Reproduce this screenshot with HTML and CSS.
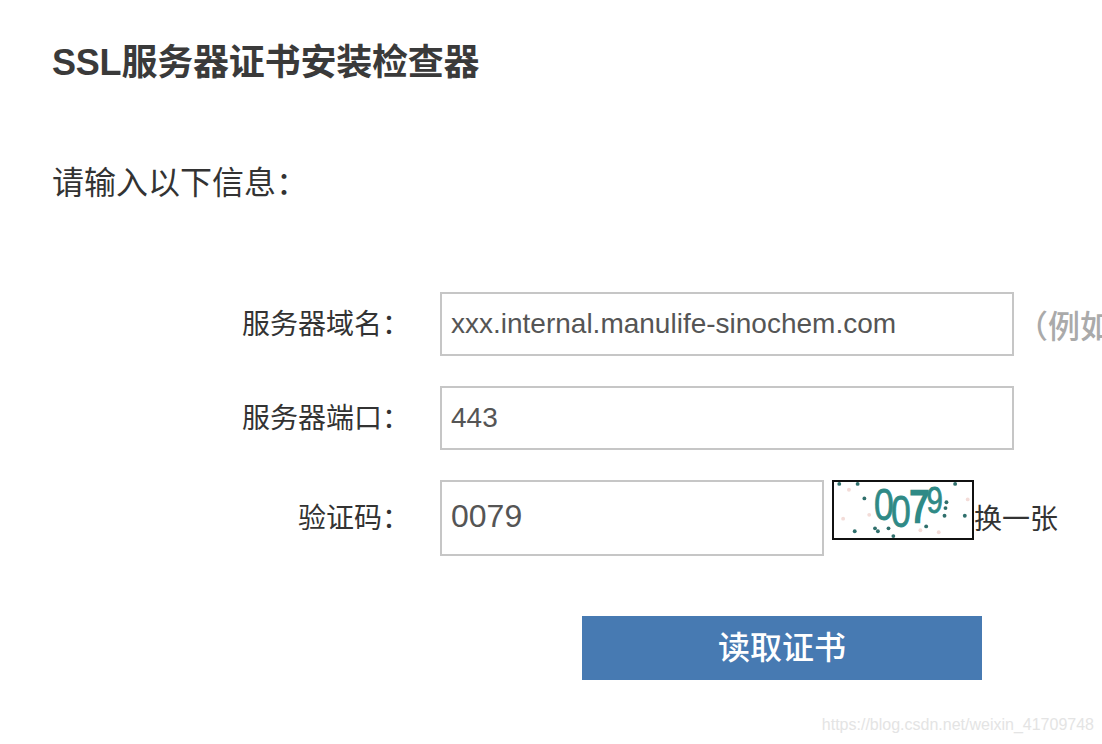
FILE: index.html
```html
<!DOCTYPE html>
<html lang="zh-CN">
<head>
    <meta charset="UTF-8">
    <meta name="viewport" content="width=device-width, initial-scale=1.0">
    <title>SSL服务器证书安装检查器</title>
    <link rel="stylesheet" href="styles.css">
</head>

<body>
    <div class="page">
        <h1 class="title">SSL服务器证书安装检查器</h1>
        <p class="intro">请输入以下信息：</p>

        <form class="check_form">
            <div class="row">
                <label class="row_label">服务器域名：</label>
                <input class="field" type="text" value="xxx.internal.manulife-sinochem.com">
                <span class="hint">（例如</span>
            </div>
            <div class="row">
                <label class="row_label">服务器端口：</label>
                <input class="field" type="text" value="443">
            </div>
            <div class="row row_code">
                <label class="row_label">验证码：</label>
                <input class="field code" type="text" value="0079">
                <svg class="captcha" viewBox="0 0 140 58" aria-label="验证码图片">
                    <g fill="#2f6f6c">
                        <circle cx="4" cy="2" r="2"/><circle cx="23" cy="2" r="2"/><circle cx="124" cy="2" r="2"/>
                        <circle cx="30" cy="17" r="2"/><circle cx="20" cy="51" r="2"/><circle cx="41" cy="48" r="2"/>
                        <circle cx="44" cy="51" r="2"/><circle cx="55" cy="48" r="2"/><circle cx="60" cy="56" r="2"/>
                        <circle cx="94" cy="46" r="2"/><circle cx="115" cy="21" r="2"/><circle cx="114" cy="27" r="2"/>
                        <circle cx="113" cy="35" r="2"/><circle cx="134" cy="35" r="2"/>
                    </g>
                    <g fill="#f3dcd8">
                        <circle cx="14" cy="8" r="2"/><circle cx="8" cy="38" r="2"/><circle cx="35" cy="34" r="2"/>
                        <circle cx="88" cy="50" r="2"/><circle cx="107" cy="52" r="2"/><circle cx="137" cy="18" r="2"/>
                    </g>
                    <text class="captcha_text" transform="scale(.8 1)"><tspan x="50" y="39" font-size="46">0</tspan><tspan x="72" y="47" font-size="46">0</tspan><tspan x="96" y="41" font-size="46" class="thick">7</tspan><tspan x="118" y="32" font-size="38">9</tspan></text>
                </svg>
                <a class="refresh" href="#">换一张</a>
            </div>
            <button class="submit" type="button">读取证书</button>
        </form>
    </div>
    <div class="watermark">https://blog.csdn.net/weixin_41709748</div>
</body>
</html>
```

FILE: styles.css
```css
/* reset */
*{margin: 0; padding: 0; box-sizing: border-box;}
html, body{height: 100%; overflow: hidden;}
body{
    background-color: #fff;
    color: #333;
    font-family: "Liberation Sans", "Noto Sans CJK SC", sans-serif;
    position: relative;
}

.page{
    padding: 40px 0 0 52px;
    width: 1102px;
}
.title{
    font-size: 36px;
    line-height: 46px;
    font-weight: 700;
    color: #3a3a3a;
    letter-spacing: -0.2px;
}
.intro{
    margin-top: 75px;
    font-size: 32px;
    line-height: 44px;
}

/* form */
.check_form{margin-top: 87px;}
.row{
    display: flex;
    align-items: center;
    height: 64px;
    margin-bottom: 30px;
    white-space: nowrap;
}
.row_label{
    flex: none;
    width: 358px;
    text-align: right;
    font-size: 28px;
    padding-bottom: 4px;
}
.field{
    flex: none;
    width: 574px;
    height: 64px;
    margin-left: 30px;
    padding: 0 9px;
    border: 2px solid #c6c6c6;
    background-color: #fff;
    color: #555;
    font-family: inherit;
    font-size: 28px;
    outline: none;
}
.hint{
    min-width: 0;
    overflow: hidden;
    margin-left: 2px;
    font-size: 32px;
    font-weight: 500;
    color: #aaa;
}

.row_code{height: 76px; margin-bottom: 60px;}
.field.code{
    width: 384px;
    height: 76px;
    font-size: 32px;
    padding-bottom: 3px;
}
.captcha{
    flex: none;
    width: 142px;
    height: 60px;
    margin: -16px 0 0 8px;
    border: 2px solid #111;
    background-color: #fff;
}
.captcha_text{
    fill: #2f8a86;
    stroke: #2f8a86;
    stroke-width: 0.8;
    font-family: "Liberation Sans", sans-serif;
}
.captcha_text .thick{stroke-width: 2.5;}
.refresh{
    margin-bottom: 2px;
    font-size: 28px;
    color: #333;
    text-decoration: none;
}

.submit{
    display: block;
    width: 400px;
    height: 64px;
    margin-left: 530px;
    padding-bottom: 7px;
    border: 0;
    background-color: #477ab2;
    color: #fff;
    font-family: inherit;
    font-size: 32px;
    font-weight: 500;
}

.watermark{
    position: absolute;
    right: 8px;
    bottom: 10px;
    font-size: 16px;
    color: #e4e4e4;
}
```
